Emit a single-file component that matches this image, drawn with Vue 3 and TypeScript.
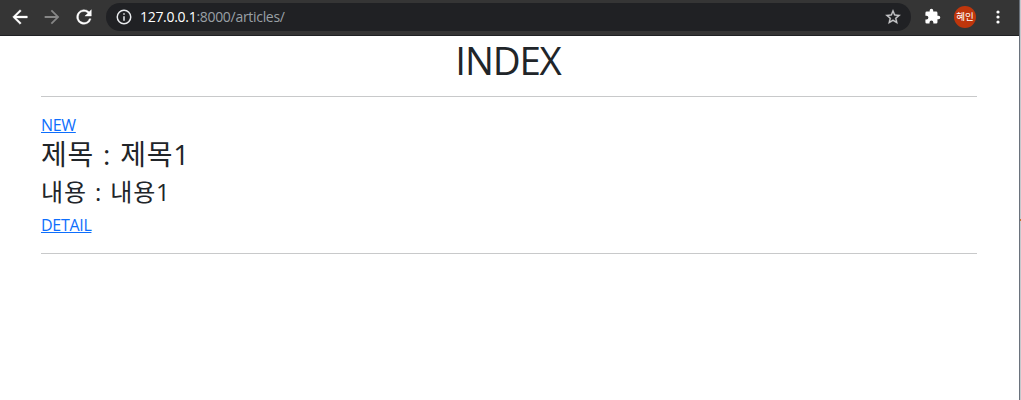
<script setup lang="ts">
interface Article {
  id: number
  title: string
  content: string
}

const host = '127.0.0.1'
const path = ':8000/articles/'
const articles: Article[] = [{ id: 1, title: '제목1', content: '내용1' }]
</script>

<template>
  <div class="window">
    <header class="toolbar">
      <svg class="icon back" viewBox="0 0 24 24"><path d="M20 11H7.83l5.59-5.59L12 4l-8 8 8 8 1.41-1.41L7.83 13H20z" /></svg>
      <svg class="icon forward" viewBox="0 0 24 24"><path d="M12 4l-1.41 1.41L16.17 11H4v2h12.17l-5.58 5.59L12 20l8-8z" /></svg>
      <svg class="icon reload" viewBox="0 0 24 24"><path d="M17.65 6.35A8 8 0 1 0 19.73 14h-2.08A6 6 0 1 1 12 6c1.66 0 3.14.69 4.22 1.78L13 11h7V4z" /></svg>
      <div class="address">
        <svg class="info" viewBox="0 0 24 24"><path d="M11 7h2v2h-2zm0 4h2v6h-2zm1-9a10 10 0 1 0 0 20 10 10 0 0 0 0-20zm0 18a8 8 0 1 1 0-16 8 8 0 0 1 0 16z" /></svg>
        <span class="url"><span class="host">{{ host }}</span><span class="path">{{ path }}</span></span>
        <svg class="star" viewBox="0 0 24 24"><path d="M22 9.24l-7.19-.62L12 2 9.19 8.63 2 9.24l5.46 4.73L5.82 21 12 17.27 18.18 21l-1.63-7.03zM12 15.4l-3.76 2.27 1-4.28-3.32-2.88 4.38-.38L12 6.1l1.71 4.04 4.38.38-3.32 2.88 1 4.28z" /></svg>
      </div>
      <svg class="puzzle" viewBox="0 0 24 24"><path d="M20.5 11H19V7a2 2 0 0 0-2-2h-4V3.500a2.500 2.500 0 0 0-5 0V5H4a2 2 0 0 0-2 2v3.800h1.500a2.700 2.700 0 0 1 0 5.400H2V20a2 2 0 0 0 2 2h3.800v-1.500a2.700 2.700 0 0 1 5.400 0V22H17a2 2 0 0 0 2-2v-4h1.500a2.500 2.500 0 0 0 0-5z" /></svg>
      <div class="avatar">혜인</div>
      <svg class="menu" viewBox="0 0 4 14"><circle cx="2" cy="2" r="1.6" /><circle cx="2" cy="7" r="1.6" /><circle cx="2" cy="12" r="1.6" /></svg>
    </header>
    <main class="page">
      <h1>INDEX</h1>
      <hr />
      <a class="new"><span>NEW</span></a>
      <article v-for="article in articles" :key="article.id">
        <h2>제목 : {{ article.title }}</h2>
        <h3>내용 : {{ article.content }}</h3>
        <a class="detail"><span>DETAIL</span></a>
        <hr />
      </article>
    </main>
    <div class="edge"><i></i></div>
  </div>
</template>

<style>
body {
  background: #fff;
  overflow: hidden;
}
</style>

<style scoped>
.window {
  position: relative;
  box-sizing: border-box;
  height: 400px;
  overflow: hidden;
  background: #fff;
  color: #212529;
  font-family: "Open Sans", "Noto Sans CJK KR", sans-serif;
}
.toolbar {
  display: flex;
  align-items: center;
  box-sizing: border-box;
  width: 1019px;
  height: 36px;
  padding: 0 0 2px 9px;
  background: #353535;
  border-bottom: 1px solid #202124;
}
svg {
  display: block;
  flex: none;
  fill: #fff;
}
.icon {
  width: 22px;
  height: 22px;
}
.back,
.reload {
  stroke: #fff;
  stroke-width: 0.4;
}
.forward {
  margin-left: 10px;
  fill: #868686;
}
.reload {
  margin-left: 10px;
}
.address {
  display: flex;
  align-items: center;
  box-sizing: border-box;
  width: 805px;
  height: 28px;
  margin-left: 11px;
  padding: 0 9px;
  border-radius: 14px;
  background: #202124;
}
.info {
  width: 18px;
  height: 18px;
  fill: #e8eaed;
}
.url {
  flex: 1;
  margin-left: 7px;
  font-size: 14px;
  line-height: 20px;
  white-space: nowrap;
}
.host {
  color: #fff;
  letter-spacing: -0.3px;
}
.path {
  color: #9aa0a6;
  letter-spacing: -0.3px;
}
.star {
  width: 18px;
  height: 18px;
  fill: #c8c9cb;
  stroke: #c8c9cb;
  stroke-width: 0.4;
}
.puzzle {
  width: 17px;
  height: 17px;
  margin-left: 13px;
}
.avatar {
  width: 22px;
  height: 22px;
  margin-left: 13px;
  border-radius: 50%;
  background: #bf360c;
  color: #fff;
  font: 400 9.5px/21px "Noto Sans CJK KR", sans-serif;
  text-align: center;
}
.menu {
  width: 4px;
  height: 14px;
  margin-left: 20px;
}
.page {
  width: 936px;
  margin-left: 41px;
}
h1,
h2,
h3 {
  margin: 0;
  font-weight: 400;
  white-space: nowrap;
}
h1 {
  height: 60px;
  font-size: 38.500px;
  line-height: 49px;
  letter-spacing: -1.2px;
  text-indent: -2px;
  text-align: center;
}
hr {
  height: 1px;
  margin: 0;
  border: 0;
  background: #c8c9ca;
}
a {
  display: block;
  height: 24px;
  color: #0d6efd;
  font-size: 16px;
  line-height: 24px;
  letter-spacing: -0.3px;
  text-decoration: underline;
}
.new {
  margin-top: 16px;
}
h2 {
  height: 40px;
  font-size: 28px;
  line-height: 34px;
  letter-spacing: 0.7px;
  word-spacing: 1.2px;
}
h3 {
  height: 36px;
  font-size: 24px;
  line-height: 29px;
  letter-spacing: 0.8px;
  word-spacing: 1.2px;
}
.detail {
  margin-bottom: 16px;
}
.edge {
  position: absolute;
  top: 0;
  right: 0;
  box-sizing: border-box;
  width: 2px;
  height: 400px;
  border-left: 1px solid #6a727c;
  background: #c4c8cc;
}
.edge i {
  display: block;
  width: 1px;
  height: 2px;
  margin-top: 219px;
  background: #c07030;
}
</style>
